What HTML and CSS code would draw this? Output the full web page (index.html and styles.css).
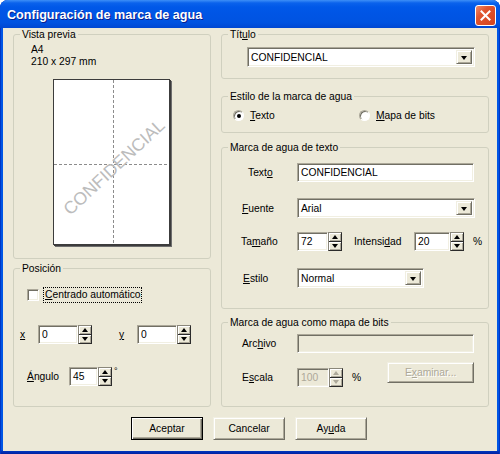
FILE: index.html
```html
<!DOCTYPE html>
<html>
<head>
<meta charset="utf-8">
<title>Configuración de marca de agua</title>
<link rel="stylesheet" href="styles.css">
</head>
<body>
<div class="window">
  <div class="titlebar">
    <span class="title">Configuración de marca de agua</span>
    <span class="close"><svg width="13" height="13" viewBox="0 0 13 13"><path d="M2.5 2.5 L10.5 10.5 M10.5 2.5 L2.5 10.5" stroke="#fff" stroke-width="2" stroke-linecap="square"/></svg></span>
  </div>
  <div class="client">
    <div class="columns">
      <div class="col col-left">
        <fieldset class="grp g-preview">
          <legend>Vista previa</legend>
          <div class="info">A4<br>210 x 297 mm</div>
          <div class="paper">
            <svg width="115" height="164" viewBox="0 0 115 164">
              <line x1="59.5" y1="0" x2="59.5" y2="164" stroke="#8c8c8c" stroke-width="1" stroke-dasharray="3 2"/>
              <line x1="0" y1="84.5" x2="115" y2="84.5" stroke="#8c8c8c" stroke-width="1" stroke-dasharray="3 2"/>
              <text x="60" y="87" class="wm" text-anchor="middle" dominant-baseline="central" transform="rotate(-43 60 87)">CONFIDENCIAL</text>
            </svg>
          </div>
        </fieldset>
        <fieldset class="grp g-pos">
          <legend>Posición</legend>
          <div class="row r-check">
            <span class="checkbox"></span>
            <span class="focus"><u>C</u>entrado automático</span>
          </div>
          <div class="row r-xy">
            <span class="lbl lx"><u>x</u></span>
            <span class="edit w40">0</span>
            <span class="spin"><span class="up"><i></i></span><span class="dn"><i></i></span></span>
            <span class="lbl ly"><u>y</u></span>
            <span class="edit w40">0</span>
            <span class="spin"><span class="up"><i></i></span><span class="dn"><i></i></span></span>
          </div>
          <div class="row r-ang">
            <span class="lbl lang"><u>Á</u>ngulo</span>
            <span class="edit w29">45</span>
            <span class="spin"><span class="up"><i></i></span><span class="dn"><i></i></span></span>
            <span class="deg">°</span>
          </div>
        </fieldset>
      </div>
      <div class="col col-right">
        <fieldset class="grp g-title">
          <legend>Tít<u>u</u>lo</legend>
          <div class="combo c-title"><span class="val">CONFIDENCIAL</span><span class="drop"><i></i></span></div>
        </fieldset>
        <fieldset class="grp g-style">
          <legend>Estilo de la marca de agua</legend>
          <div class="row r-radio">
            <span class="ritem first"><span class="radio on"></span><span class="rlabel"><u>T</u>exto</span></span>
            <span class="ritem"><span class="radio"></span><span class="rlabel"><u>M</u>apa de bits</span></span>
          </div>
        </fieldset>
        <fieldset class="grp g-text">
          <legend>Marca de agua de texto</legend>
          <div class="row r1">
            <span class="lbl l-texto">Text<u>o</u></span>
            <span class="edit w177">CONFIDENCIAL</span>
          </div>
          <div class="row r2">
            <span class="lbl l-std"><u>F</u>uente</span>
            <div class="combo c-font"><span class="val">Arial</span><span class="drop"><i></i></span></div>
          </div>
          <div class="row r3">
            <span class="lbl l-tam">Ta<u>m</u>año</span>
            <span class="edit w31">72</span>
            <span class="spin"><span class="up"><i></i></span><span class="dn"><i></i></span></span>
            <span class="lbl l-int">Intensi<u>d</u>ad</span>
            <span class="edit w36">20</span>
            <span class="spin"><span class="up"><i></i></span><span class="dn"><i></i></span></span>
            <span class="pct">%</span>
          </div>
          <div class="row r4">
            <span class="lbl l-estilo"><u>E</u>stilo</span>
            <div class="combo c-estilo"><span class="val">Normal</span><span class="drop"><i></i></span></div>
          </div>
        </fieldset>
        <fieldset class="grp g-bmp">
          <legend>Marca de agua como mapa de bits</legend>
          <div class="row b1">
            <span class="lbl l-std">Arc<u>h</u>ivo</span>
            <span class="edit disabled w177"></span>
          </div>
          <div class="row b2">
            <span class="lbl l-std">E<u>s</u>cala</span>
            <span class="edit disabled w32">100</span>
            <span class="spin off"><span class="up"><i></i></span><span class="dn"><i></i></span></span>
            <span class="pct p2">%</span>
            <span class="btn btn-off">E<u>x</u>aminar...</span>
          </div>
        </fieldset>
      </div>
    </div>
    <div class="buttons">
      <span class="btn default">Aceptar</span>
      <span class="btn">Cancelar</span>
      <span class="btn">Ay<u>u</u>da</span>
    </div>
  </div>
</div>
</body>
</html>
```

FILE: styles.css
```css
* { box-sizing: border-box; }
html, body { margin: 0; padding: 0; background: #ffffff; }
body {
  font-family: "Liberation Sans", Arial, sans-serif;
  font-size: 10.3px;
  color: #000;
}
u { text-decoration: underline; text-underline-offset: 1px; }

.window {
  width: 500px;
  height: 454px;
  display: flex;
  flex-direction: column;
  border-radius: 8px 8px 0 0;
  overflow: hidden;
  background: linear-gradient(to bottom, #0055E5 0, #0055E5 450px, #0037C0 451px, #00209F 454px);
  box-shadow: inset 1px 0 #0036C4, inset -1px 0 #0036C4;
}

.titlebar {
  height: 28px;
  flex: none;
  display: flex;
  justify-content: space-between;
  align-items: flex-start;
  padding: 0 4px 0 7px;
  background: linear-gradient(to bottom, #3D8FF7 0, #0A62EC 3px, #0058E8 7px, #0055E5 50%, #0053E1 80%, #0047D2 100%);
}
.title {
  margin-top: 8px;
  line-height: 14px;
  font-size: 12.6px;
  font-weight: bold;
  color: #fff;
  text-shadow: 1px 1px 0 #0A1E8C;
  white-space: nowrap;
}
.close {
  margin-top: 5px;
  width: 21px;
  height: 21px;
  border: 1px solid #fff;
  border-radius: 3px;
  background: linear-gradient(135deg, #F08C6C 0, #E0552F 35%, #D4431E 100%);
  display: flex;
  align-items: center;
  justify-content: center;
}

.client {
  flex: 1;
  margin: 0 3px 3px 3px;
  background: #ECE9D8;
  padding: 1px 8px 0 10px;
}
.columns {
  display: flex;
  gap: 10px;
}
.col { display: flex; flex-direction: column; }
.col-left { width: 198px; }
.col-right { width: 268px; }

.grp {
  margin: 0;
  padding: 0;
  min-width: 0;
  border: 1px solid #D0D0BF;
  border-radius: 3px;
}
.grp legend {
  margin-left: 6px;
  padding: 0 2px;
  line-height: 11px;
}

.g-preview { height: 230px; }
.g-pos { height: 144px; margin-top: 4px; }
.g-title { height: 50px; }
.g-style { height: 42px; margin-top: 12px; }
.g-text { height: 167px; margin-top: 9px; }
.g-bmp { height: 90px; margin-top: 8px; }

.info {
  margin-top: 4px;
  padding-left: 17px;
  line-height: 12px;
}
.paper {
  margin-top: 11px;
  margin-left: 39px;
  width: 117px;
  height: 166px;
  background: #fff;
  border: 1px solid #3c3c3c;
  box-shadow: 1px 1px 0 #3c3c3c, 2px 2px 0 #6e6e6e;
}
.paper svg { display: block; }
.wm {
  font-family: "Liberation Sans", Arial, sans-serif;
  font-size: 17.6px;
  fill: #bcbcbc;
}

.row { display: flex; align-items: center; }
.lbl { white-space: nowrap; flex: none; }

.r-check { margin-top: 13px; height: 16px; padding-left: 13px; }
.checkbox {
  width: 12px; height: 12px;
  background: #fff;
  border: 1px solid;
  border-color: #ACA899 #fff #fff #ACA899;
  box-shadow: inset 1px 1px #716F64, inset -1px -1px #F1EFE2;
}
.focus {
  margin-left: 4px;
  height: 16px;
  line-height: 14px;
  padding: 0 0 0 1px;
  border: 1px dotted #000;
}
.r-xy { margin-top: 22px; height: 19px; }
.lx { margin-left: 6px; width: 18px; }
.ly { margin-left: 27px; width: 18px; }
.r-ang { margin-top: 23px; height: 19px; }
.lang { margin-left: 13px; width: 42px; }
.deg { align-self: flex-start; margin-left: 2px; font-size: 9px; line-height: 9px; }

.edit {
  flex: none;
  height: 19px;
  display: flex;
  align-items: center;
  padding: 0 3px;
  background: #fff;
  border: 1px solid;
  border-color: #ACA899 #fff #fff #ACA899;
  box-shadow: inset 1px 1px #716F64, inset -1px -1px #F1EFE2;
  white-space: nowrap;
  overflow: hidden;
}
.edit.disabled { background: #ECE9D8; color: #ACA899; }
.w40 { width: 40px; }
.w29 { width: 29px; }
.w31 { width: 31px; }
.w32 { width: 32px; }
.w36 { width: 36px; }
.w177 { width: 177px; }

.spin {
  flex: none;
  width: 14px;
  height: 19px;
  display: flex;
  flex-direction: column;
  border: 1px solid #2b2b2b;
  border-top-color: #8a877a;
  border-left-color: #8a877a;
  background: #2b2b2b;
  gap: 1px;
}
.spin .up, .spin .dn {
  flex: 1;
  display: flex;
  align-items: center;
  justify-content: center;
  background: #ECE9D8;
  box-shadow: inset 1px 1px #fff, inset -1px -1px #ACA899;
}
.spin i { width: 0; height: 0; border-left: 3.5px solid transparent; border-right: 3.5px solid transparent; }
.spin .up i { border-bottom: 4px solid #000; }
.spin .dn i { border-top: 4px solid #000; }
.spin.off .up i { border-bottom-color: #ACA899; }
.spin.off .dn i { border-top-color: #ACA899; }

.combo {
  flex: none;
  height: 20px;
  display: flex;
  padding: 2px;
  background: #fff;
  border: 1px solid;
  border-color: #ACA899 #fff #fff #ACA899;
  box-shadow: inset 1px 1px #716F64, inset -1px -1px #F1EFE2;
}
.combo .val { flex: 1; display: flex; align-items: center; padding-left: 1px; white-space: nowrap; }
.combo .drop {
  width: 16px;
  display: flex;
  align-items: center;
  justify-content: center;
  background: #ECE9D8;
  border: 1px solid;
  border-color: #F1EFE2 #716F64 #716F64 #F1EFE2;
  box-shadow: inset 1px 1px #fff, inset -1px -1px #ACA899;
}
.combo .drop i { width: 0; height: 0; border-top: 4px solid #000; border-left: 3.5px solid transparent; border-right: 3.5px solid transparent; margin-top: 1px; }
.c-title { margin-top: 7px; margin-left: 25px; width: 228px; }
.c-font { width: 178px; }
.c-estilo { width: 127px; }

.r-radio { margin-top: 8px; height: 11px; padding-left: 11px; }
.ritem { display: flex; align-items: center; }
.ritem.first { width: 126px; }
.radio {
  width: 11px; height: 11px;
  border-radius: 50%;
  background: #fff;
  border: 1px solid;
  border-color: #ACA899 #fff #fff #ACA899;
  box-shadow: inset 1px 1px #716F64;
  display: flex;
  align-items: center;
  justify-content: center;
}
.radio.on::after { content: ""; width: 4px; height: 4px; border-radius: 50%; background: #000; }
.rlabel { margin-left: 6px; line-height: 11px; }

.r1 { margin-top: 10px; height: 19px; }
.l-texto { margin-left: 26px; width: 49px; }
.l-std { margin-left: 20px; width: 55px; }
.r2 { margin-top: 16px; height: 20px; }
.r3 { margin-top: 14px; height: 19px; }
.l-tam { margin-left: 19px; width: 56px; }
.l-int { margin-left: 12px; width: 60px; }
.pct { margin-left: 9px; }
.r4 { margin-top: 17px; height: 20px; }
.l-estilo { margin-left: 21px; width: 54px; }

.b1 { margin-top: 6px; height: 19px; }
.b2 { margin-top: 9px; height: 25px; align-items: flex-end; }
.b2 .lbl, .b2 .pct { line-height: 19px; }
.p2 { margin-left: 9px; }

.btn {
  flex: none;
  width: 72px;
  height: 23px;
  display: flex;
  align-items: center;
  justify-content: center;
  background: #ECE9D8;
  border: 1px solid;
  border-color: #F1EFE2 #716F64 #716F64 #F1EFE2;
  box-shadow: inset 1px 1px #fff, inset -1px -1px #ACA899;
  white-space: nowrap;
}
.btn.default {
  border: 1px solid #000;
  box-shadow: inset 1px 1px #fff, inset -1px -1px #716F64, inset -2px -2px #ACA899;
}
.btn-off {
  align-self: flex-start;
  margin-left: 26px;
  width: 87px;
  height: 21px;
  color: #ACA899;
  text-shadow: 1px 1px 0 #fff;
}
.buttons {
  display: flex;
  gap: 10px;
  margin-top: 10px;
  padding-left: 118px;
}
```
